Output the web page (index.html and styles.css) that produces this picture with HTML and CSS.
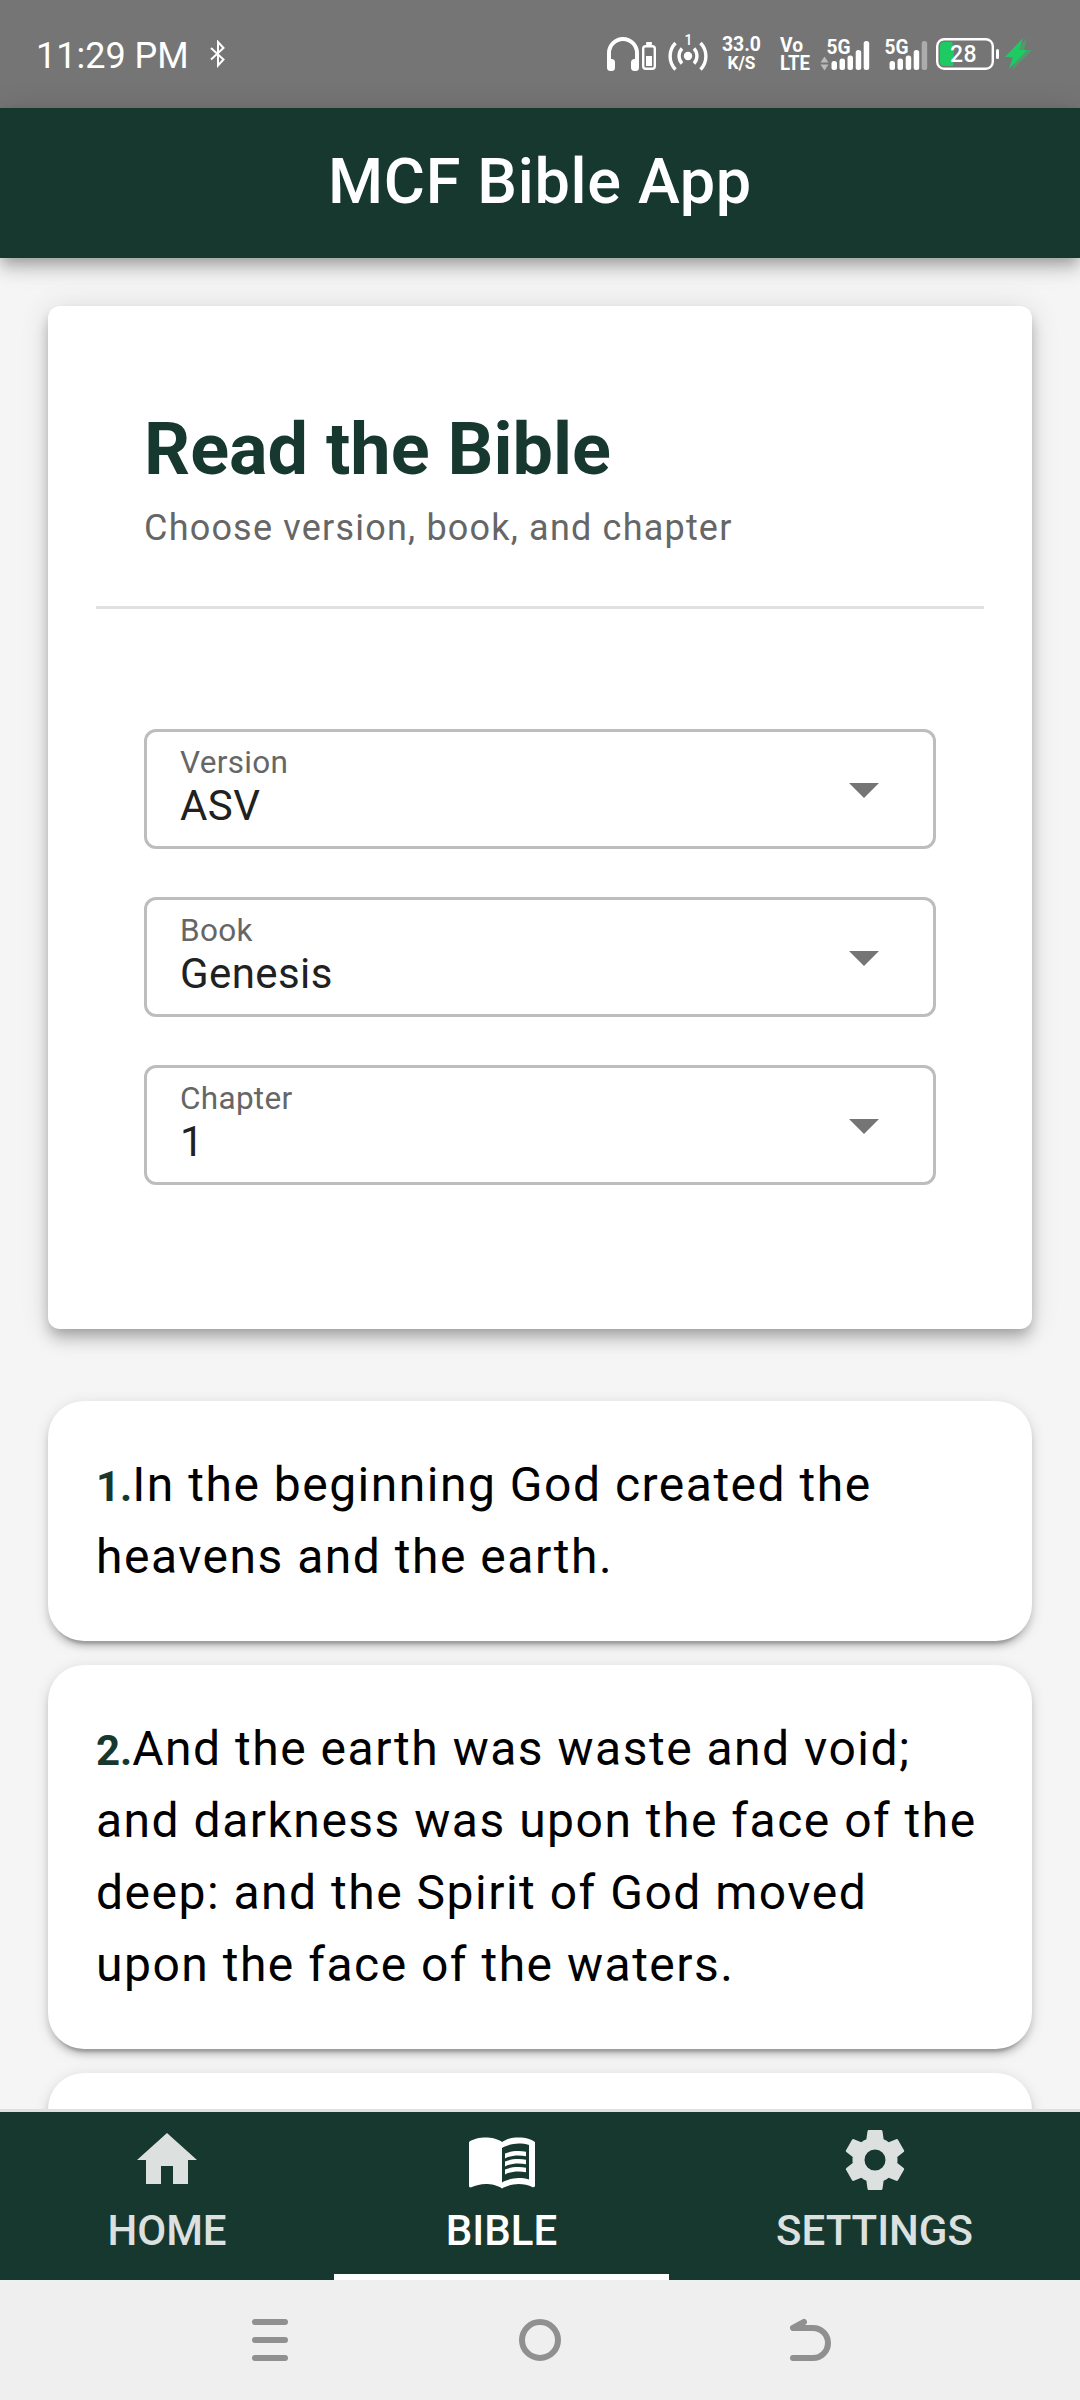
FILE: index.html
```html
<!DOCTYPE html>
<html lang="en">
<head>
<meta charset="utf-8">
<title>MCF Bible App</title>
<link rel="stylesheet" href="styles.css">
</head>
<body>
<div class="screen">
  <div class="status">
    <span class="time">11:29 PM</span>
    <svg class="bluetooth" viewBox="0 0 18 28" width="18" height="28"><path d="M2 8 14.5 19.5 9 25.5V2L14.5 8 2 19.5" fill="none" stroke="#fff" stroke-width="2"/></svg>
    <svg class="indicators" viewBox="600 24 440 60" width="440" height="60">
      <g fill="#fff">
        <path d="M609 62V53a14 14 0 0 1 28 0v9" fill="none" stroke="#fff" stroke-width="4"/>
        <rect x="607" y="59" width="8" height="12" rx="3.5"/><rect x="631" y="59" width="8" height="12" rx="3.5"/>
        <rect x="643.2" y="46.2" width="11.600" height="22.600" rx="2.500" fill="none" stroke="#fff" stroke-width="2.400"/>
        <rect x="646" y="42" width="6" height="3" rx="1"/><rect x="646" y="56" width="6" height="10"/>
        <circle cx="688" cy="56" r="4.200"/>
        <path d="M682 48.500a11 11 0 0 0 0 15M694 48.500a11 11 0 0 1 0 15M675.500 43a19 19 0 0 0 0 26.500M700.500 43a19 19 0 0 1 0 26.500" fill="none" stroke="#fff" stroke-width="3.400"/>
        <path d="m820.500 62.500 4-6 4 6zM820.500 64.500l4 6 4-6z" opacity=".5"/>
        <rect x="831.500" y="61" width="5.500" height="9" rx="2.500"/><rect x="839.500" y="58.500" width="5.500" height="11.500" rx="2.500"/><rect x="847.500" y="55.500" width="5.500" height="14.500" rx="2.500"/><rect x="855.700" y="50" width="5.500" height="20" rx="2.500"/><rect x="863.700" y="41" width="5.500" height="29" rx="2.500"/>
        <rect x="889.500" y="61" width="5.500" height="9" rx="2.500"/><rect x="897.500" y="58.500" width="5.500" height="11.500" rx="2.500"/><rect x="905.700" y="55.500" width="5.500" height="14.500" rx="2.500"/><rect x="913.700" y="50" width="5.500" height="20" rx="2.500"/><rect x="921.700" y="41" width="5.500" height="29" rx="2.500" opacity=".4"/>
        <rect x="996" y="49" width="3" height="10" rx="1.500"/>
      </g>
      <path d="M944 42h8q3 12 1 24h-9q-4 0-4-4V46q0-4 4-4z" fill="#1ecb63"/>
      <rect x="937.200" y="39.200" width="55.600" height="29.600" rx="7" fill="none" stroke="#fff" stroke-width="2.400"/>
      <path d="M1027 38 1009 58h7l-4 12 20-20h-8z" fill="#1ecb63" opacity=".45"/>
      <path d="M1023 38 1005 57h8l-4 12 18-19h-8z" fill="#1ecb63"/>
      <g class="tiny">
        <text class="light" x="684.500" y="45" font-size="14">1</text>
        <text x="722" y="51" font-size="20.500" textLength="39" lengthAdjust="spacingAndGlyphs">33.0</text>
        <text x="727.500" y="69" font-size="17.500" textLength="28" lengthAdjust="spacingAndGlyphs">K/S</text>
        <text x="780" y="52" font-size="19.500" textLength="23" lengthAdjust="spacingAndGlyphs">Vo</text>
        <text x="780" y="70" font-size="19.500" textLength="30" lengthAdjust="spacingAndGlyphs">LTE</text>
        <text x="826.500" y="53.500" font-size="21" textLength="24" lengthAdjust="spacingAndGlyphs">5G</text>
        <text x="884.500" y="53.500" font-size="21" textLength="24" lengthAdjust="spacingAndGlyphs">5G</text>
        <text class="light" x="950" y="62" font-size="23" textLength="26.500">28</text>
      </g>
    </svg>
  </div>
  <header class="appbar"><h1>MCF Bible App</h1></header>
  <main class="content">
    <section class="card">
      <div class="intro">
        <h2>Read the Bible</h2>
        <p>Choose version, book, and chapter</p>
      </div>
      <div class="fields">
        <div class="field"><div><div class="label">Version</div><div class="value">ASV</div></div><i class="caret"></i></div>
        <div class="field"><div><div class="label">Book</div><div class="value">Genesis</div></div><i class="caret"></i></div>
        <div class="field"><div><div class="label">Chapter</div><div class="value">1</div></div><i class="caret"></i></div>
      </div>
    </section>
    <div class="verses">
      <article class="verse"><b>1.</b>In the beginning God created the heavens and the earth.</article>
      <article class="verse"><b>2.</b>And the earth was waste and void; and darkness was upon the face of the deep: and the Spirit of God moved upon the face of the waters.</article>
      <article class="verse"></article>
    </div>
  </main>
  <nav class="tabs">
    <div class="tab"><svg viewBox="0 0 24 24"><path d="M10 20v-6h4v6h5v-8h3L12 3 2 12h3v8z"/></svg><span>HOME</span></div>
    <div class="tab active"><svg viewBox="0 0 24 24"><path d="M21 5c-1.110-.350-2.330-.500-3.500-.500-1.950 0-4.050.400-5.500 1.500-1.450-1.100-3.550-1.500-5.500-1.500S2.450 4.900 1 6v14.650c0 .250.250.500.500.500.100 0 .150-.050.250-.050C3.100 20.450 5.050 20 6.500 20c1.950 0 4.050.400 5.500 1.500 1.350-.850 3.800-1.500 5.500-1.500 1.650 0 3.350.300 4.750 1.050.100.050.150.050.250.050.250 0 .500-.250.500-.500V6c-.600-.450-1.250-.750-2-1zm0 13.500c-1.100-.350-2.300-.500-3.500-.500-1.700 0-4.150.650-5.500 1.500V8c1.350-.850 3.800-1.500 5.500-1.500 1.200 0 2.400.150 3.500.500v11.500z"/><path d="M17.500 10.500c.880 0 1.730.090 2.500.260V9.240c-.790-.150-1.640-.240-2.500-.240-1.700 0-3.240.290-4.500.830v1.660c1.130-.640 2.700-.990 4.500-.990zM13 12.490v1.660c1.130-.640 2.700-.990 4.500-.990.880 0 1.730.090 2.500.260V11.900c-.790-.150-1.640-.240-2.500-.240-1.700 0-3.240.300-4.500.830zM17.500 14.330c-1.700 0-3.240.290-4.500.830v1.660c1.130-.640 2.700-.990 4.500-.990.880 0 1.730.090 2.500.260v-1.520c-.790-.160-1.640-.240-2.500-.240z"/></svg><span>BIBLE</span></div>
    <div class="tab"><svg viewBox="0 0 24 24"><path d="M12 15.500A3.500 3.500 0 0 1 8.500 12 3.500 3.500 0 0 1 12 8.500a3.500 3.500 0 0 1 3.500 3.500 3.500 3.500 0 0 1-3.500 3.500m7.430-2.530c.040-.320.070-.640.070-.970s-.030-.660-.070-1l2.110-1.630c.190-.150.240-.420.120-.640l-2-3.460c-.120-.220-.390-.310-.610-.220l-2.490 1c-.520-.390-1.060-.730-1.690-.980l-.370-2.650A.506.506 0 0 0 14 2h-4c-.250 0-.460.180-.500.420l-.370 2.650c-.630.250-1.170.590-1.690.980l-2.490-1c-.220-.090-.490 0-.610.220l-2 3.460c-.130.220-.070.490.120.640L4.570 11c-.040.340-.070.670-.070 1s.030.650.070.970l-2.110 1.660c-.190.150-.250.420-.120.640l2 3.460c.120.220.390.300.610.220l2.490-1.010c.520.400 1.060.740 1.690.990l.370 2.650c.040.240.250.420.500.420h4c.250 0 .460-.180.500-.420l.370-2.650c.630-.260 1.170-.590 1.690-.990l2.490 1.010c.220.080.490 0 .610-.220l2-3.460c.120-.220.070-.490-.120-.640z"/></svg><span>SETTINGS</span></div>
  </nav>
  <div class="sysnav">
    <svg viewBox="0 0 48 48"><path d="M9 6h30M9 24h30M9 42h30"/></svg>
    <svg viewBox="0 0 48 48"><circle cx="24" cy="24" r="18"/></svg>
    <svg viewBox="0 0 48 48"><path d="M18 6 7 12H27a15 15 0 0 1 0 30H7"/></svg>
  </div>
</div>
</body>
</html>
```
FILE: styles.css
```css
* { box-sizing: border-box; }
body { margin: 0; font-family: Roboto, "Liberation Sans", sans-serif; }
.screen { width: 1080px; height: 2400px; display: flex; flex-direction: column; background: #f5f5f5; overflow: hidden; }
.status { flex: none; height: 108px; background: #757575; color: #fff; display: flex; align-items: center; padding-left: 36px; }
.time { width: 173px; font-size: 36px; line-height: 42px; padding-top: 3px; white-space: nowrap; }
.indicators { margin-left: auto; margin-right: 40px; }
.tiny { fill: #fff; font-weight: 700; }
.light { font-weight: 500; }
.appbar { flex: none; height: 150px; background: #17382f; color: #fff; display: flex; align-items: center; justify-content: center; padding-bottom: 2px; position: relative; z-index: 1; box-shadow: 0 6px 12px -3px rgba(0,0,0,.2), 0 12px 15px rgba(0,0,0,.14), 0 3px 30px rgba(0,0,0,.12); }
h1, h2, p { margin: 0; }
h1 { font-size: 63px; font-weight: 500; line-height: 72px; letter-spacing: 0.65px; }
.content { flex: 1; min-height: 0; overflow: hidden; padding: 48px 48px 0; }
.card { height: 1023px; background: #fff; border-radius: 12px; padding: 48px; box-shadow: 0 6px 12px -3px rgba(0,0,0,.2), 0 12px 15px rgba(0,0,0,.14), 0 3px 30px rgba(0,0,0,.12); }
.intro { height: 255px; padding: 48px 48px 0; border-bottom: 3px solid #e0e0e0; }
h2 { font-size: 72px; font-weight: 700; line-height: 96px; color: #17382f; }
.intro p { font-size: 36px; line-height: 60px; letter-spacing: 1.2px; color: #666; }
.fields { padding: 120px 48px 0; display: flex; flex-direction: column; gap: 48px; }
.field { height: 120px; border: 3px solid #bdbdbd; border-radius: 12px; padding: 12px 54px 0 33px; display: flex; justify-content: space-between; }
.label { font-size: 31.5px; line-height: 37px; letter-spacing: 0.3px; color: #666; }
.value { font-size: 42px; line-height: 50px; letter-spacing: 0.4px; color: #212121; }
.caret { margin-top: 39px; width: 30px; height: 15px; background: #757575; clip-path: polygon(0 0, 100% 0, 50% 100%); }
.verses { padding-top: 72px; display: flex; flex-direction: column; gap: 24px; }
.verse { background: #fff; border-radius: 36px; padding: 48px; font-size: 48px; line-height: 72px; letter-spacing: 1.5px; color: #000; min-height: 240px; box-shadow: 0 9px 3px -6px rgba(0,0,0,.2), 0 6px 6px rgba(0,0,0,.14), 0 3px 15px rgba(0,0,0,.12); }
.verse b { font-size: 42px; line-height: 1; color: #17382f; letter-spacing: 0; }
.tabs { flex: none; height: 171px; border-top: 3px solid #e0e0e0; background: #17382f; display: grid; grid-template-columns: 334px 335px 411px; }
.tab { display: flex; flex-direction: column; align-items: center; padding-top: 12px; color: #dce1e0; border-bottom: 6px solid transparent; }
.tab svg { width: 72px; height: 72px; fill: currentColor; }
.tab span { font-size: 42px; font-weight: 500; line-height: 48px; margin-top: 11px; }
.active { color: #fff; border-bottom-color: #fff; }
.sysnav { flex: none; height: 120px; background: #efefef; display: grid; grid-template-columns: repeat(3, 270px); justify-content: center; justify-items: center; align-items: center; }
.sysnav svg { width: 48px; height: 48px; fill: none; stroke: #909090; stroke-width: 6; stroke-linecap: round; stroke-linejoin: round; }
```
